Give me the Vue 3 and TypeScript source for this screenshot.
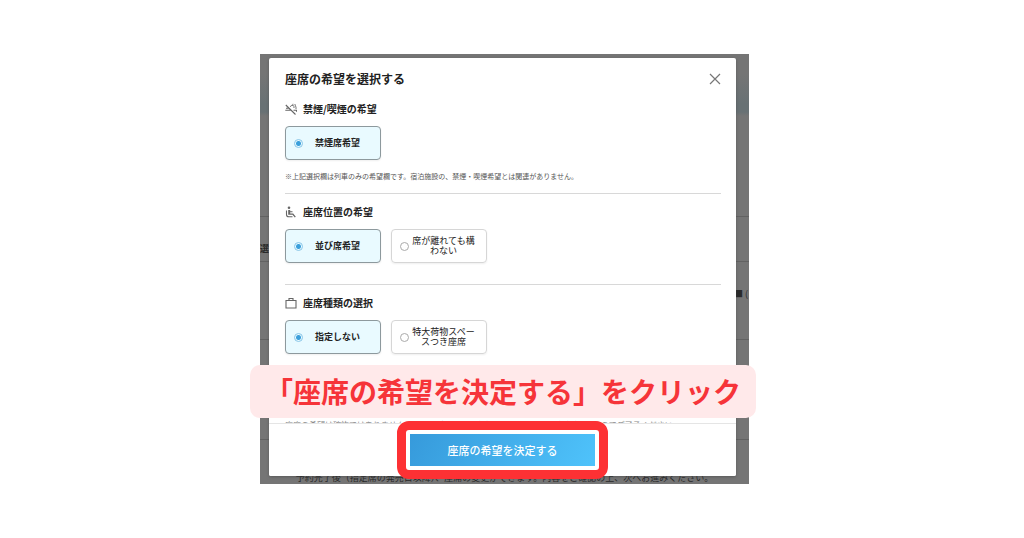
<script setup lang="ts">
import { reactive } from 'vue'

type IconName = 'smoke' | 'seat' | 'bag'

interface Section {
  id: string
  icon: IconName
  title: string
  options: string[]
  note?: string
}

const sections: Section[] = [
  {
    id: 'smoking',
    icon: 'smoke',
    title: '禁煙/喫煙の希望',
    options: ['禁煙席希望'],
    note: '※上記選択欄は列車のみの希望欄です。宿泊施設の、禁煙・喫煙希望とは関連がありません。',
  },
  { id: 'position', icon: 'seat', title: '座席位置の希望', options: ['並び席希望', '席が離れても構わない'] },
  { id: 'type', icon: 'bag', title: '座席種類の選択', options: ['指定しない', '特大荷物スペースつき座席'] },
]

const chosen = reactive<Record<string, string>>({
  smoking: '禁煙席希望',
  position: '並び席希望',
  type: '指定しない',
})
</script>

<template>
  <main class="page">
    <div class="stage">
      <div class="behind" aria-hidden="true">
        <div class="row row-hero"></div>
        <div class="row row-choice">選</div>
        <div class="row row-price">■ (</div>
        <div class="row row-plain"></div>
        <div class="row row-foot">予約完了後（指定席の発売日以降）、座席の変更ができます。内容をご確認の上、次へお進みください。</div>
      </div>

      <section class="dialog" role="dialog" aria-labelledby="dialog-title">
        <header class="head">
          <h1 id="dialog-title">座席の希望を選択する</h1>
          <button class="close" type="button" aria-label="閉じる">
            <svg viewBox="0 0 12 12"><path d="M1 1L11 11M11 1L1 11" /></svg>
          </button>
        </header>

        <div class="body">
          <fieldset v-for="s in sections" :key="s.id" class="group">
            <legend>
              <svg v-if="s.icon === 'smoke'" class="icon" viewBox="0 0 12 12">
                <path d="M.8 2L10.500 11.500M.3 7.300H6.500M1 5.300H3.500M8.500 7.300H11.500V8.800" />
                <path class="thin" d="M5.500 4C5.500 2.500 6.500 2 8 2.500M8 .8C7 2.500 9.500 2.500 9 5M10 1C9.500 2.500 11.500 3 11 6" />
              </svg>
              <svg v-else-if="s.icon === 'seat'" class="icon" viewBox="0 0 12 12">
                <circle cx="4" cy="1.800" r="1.300" class="solid" />
                <path class="solid" d="M3.200 4H5.200V5.200H7.500V6.200H5.200V7.500H8.200L10.800 10.800L9.800 11.500L7.500 8.800H3.200Z" />
                <path d="M1.500 4.500V8.500Q1.500 10.800 3.800 10.800H7.500" />
              </svg>
              <svg v-else class="icon" viewBox="0 0 12 12">
                <path d="M1 3.500H11V11H1ZM4 3.500V1.500H8V3.500" />
              </svg>
              <span>{{ s.title }}</span>
            </legend>
            <div class="options">
              <label v-for="o in s.options" :key="o" class="option" :class="{ on: chosen[s.id] === o }">
                <input v-model="chosen[s.id]" type="radio" :name="s.id" :value="o" />
                <span>{{ o }}</span>
              </label>
            </div>
            <p v-if="s.note" class="note">{{ s.note }}</p>
          </fieldset>
          <p class="more">座席の希望は確約ではありません。　満席の場合は、ご希望に添えないことがございますのでご了承ください。</p>
        </div>

        <footer class="foot">
          <div class="marker">
            <button class="submit" type="button">座席の希望を決定する</button>
          </div>
        </footer>
      </section>

      <p class="callout">「座席の希望を決定する」をクリック</p>
    </div>
  </main>
</template>

<style>
body {
  margin: 0;
  background: #fff;
}
</style>

<style scoped>
* {
  box-sizing: border-box;
}
.page {
  min-height: 100vh;
  display: grid;
  grid-template-columns: 260fr 489fr 275fr;
  align-items: center;
  font-family: 'Noto Sans CJK JP', sans-serif;
  color: #222;
}
h1,
p {
  margin: 0;
}
.stage {
  position: relative;
  grid-column: 2;
  padding: 4px 13px 8px 9px;
  background: #757575;
}
.behind {
  position: absolute;
  inset: 0;
  display: flex;
  flex-direction: column;
  overflow: hidden;
  font-size: 9px;
  line-height: 12px;
  color: #292929;
}
.row {
  border-bottom: 1px solid #626262;
}
.row-hero {
  height: 163px;
  background: linear-gradient(#757575 20px, #687174 50px, #687174 58px, #757575 62px);
}
.row-choice {
  height: 45px;
  padding-top: 26px;
  font-weight: 700;
}
.row-price {
  height: 78px;
  padding: 26px 1px 0;
  text-align: right;
  white-space: nowrap;
}
.row-plain {
  height: 100px;
}
.row-foot {
  flex: 1;
  display: flex;
  align-items: flex-end;
  justify-content: center;
  border: 0;
  white-space: nowrap;
}
.dialog {
  position: relative;
  display: flex;
  flex-direction: column;
  background: #fff;
  border-radius: 2px;
  box-shadow: 0 1px 3px #4448;
}
.head {
  display: flex;
  align-items: center;
  justify-content: space-between;
  padding: 12px 15px 3px 16px;
}
h1 {
  font-size: 12px;
  line-height: 18px;
  font-weight: 700;
}
.close {
  display: flex;
  padding: 0;
  border: 0;
  background: none;
}
.close svg {
  width: 12px;
  height: 12px;
  fill: none;
  stroke: #777;
  stroke-width: 1.2;
}
.body {
  max-height: 332px;
  padding: 0 15px 0 16px;
  overflow: hidden;
}
.group {
  min-width: 0;
  margin: 0;
  padding: 0 0 21px;
  border: 0;
  border-bottom: 1px solid #d8d8d8;
}
.group:first-child {
  padding-bottom: 11px;
}
.group:nth-child(3) {
  border-bottom: 0;
}
legend {
  display: flex;
  align-items: center;
  gap: 6px;
  padding: 11px 0 10px;
  font-size: 10px;
  line-height: 14px;
  font-weight: 700;
}
.icon {
  width: 12px;
  height: 12px;
  fill: none;
  stroke: #666;
  stroke-width: 1.1;
}
.icon .thin {
  stroke-width: 0.9;
}
.icon .solid {
  fill: #666;
  stroke: none;
}
.options {
  display: flex;
  gap: 10px;
}
.option {
  display: flex;
  align-items: center;
  width: 96px;
  min-height: 34px;
  padding: 0 11px 0 8px;
  gap: 3px;
  border: 1px solid #d6d6d6;
  border-radius: 4px;
  font-size: 9px;
  line-height: 10px;
  box-shadow: 0 1px 2px #0001;
}
.option span {
  flex: 1;
  text-align: center;
}
.option.on {
  border-color: #8d999d;
  background: #e9faff;
  font-weight: 700;
}
.option input {
  appearance: none;
  flex: none;
  width: 9px;
  height: 9px;
  margin: 0;
  border: 1px solid #aaa;
  border-radius: 50%;
  background: #fff;
}
.option input:checked {
  border-color: #8ac6e8;
  background: radial-gradient(circle, #3b9fdb 2px, #e9faff 3px);
}
.note {
  padding-top: 10px;
  font-size: 7px;
  line-height: 12px;
  color: #555;
}
.more {
  padding-top: 44px;
  font-size: 8px;
  line-height: 12px;
  white-space: nowrap;
  color: #888;
}
.foot {
  display: flex;
  justify-content: center;
  height: 53px;
  border-top: 1px solid #e5e5e5;
  border-radius: 0 0 2px 2px;
  background: #fff;
}
.marker {
  z-index: 1;
  flex: none;
  width: 211px;
  height: 58px;
  margin-top: -3px;
  padding: 4px;
  border: 9px solid #fd3134;
  border-radius: 12px;
  background: #fff;
}
.submit {
  display: block;
  width: 100%;
  height: 100%;
  padding: 0;
  border: 0;
  background: linear-gradient(120deg, #369adb, #4fc3fb);
  font: 500 11px/16px 'Noto Sans CJK JP', sans-serif;
  color: #fff;
}
.callout {
  position: absolute;
  left: -10px;
  right: -7px;
  top: 311px;
  z-index: 2;
  border-radius: 10px;
  background: #ffe9ea;
  font-size: 28px;
  line-height: 53px;
  font-weight: 700;
  text-align: center;
  white-space: nowrap;
  color: #f63439;
}
</style>
